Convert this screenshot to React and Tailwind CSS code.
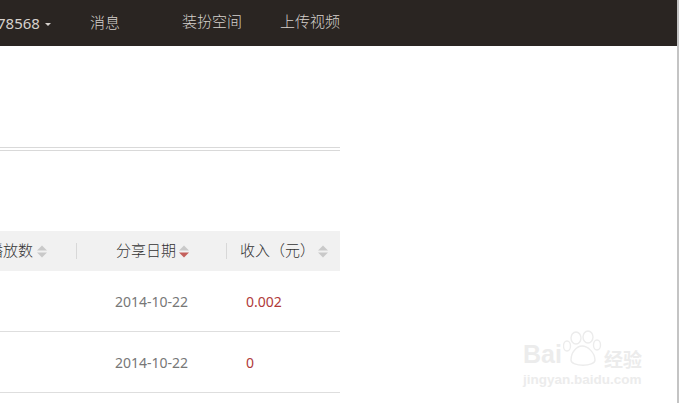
const cjk = { fontFamily: '"Noto Sans CJK SC", sans-serif' };
const latin = { fontFamily: '"Noto Sans", sans-serif' };

const SortArrows = ({ active }) => (
  <svg width="10" height="13" viewBox="0 0 10 13" className="shrink-0">
    <path d="M5 0.5 L10 5.5 H0 Z" fill="#c9c9c9" />
    <path d="M5 12.5 L10 7.5 H0 Z" fill={active ? "#c4605c" : "#c9c9c9"} />
  </svg>
);

const Row = ({ date, income }) => (
  <div className="h-[61px] border-b border-[#dedede] flex items-center text-[14px]" style={latin}>
    <span className="ml-[115px] w-[131px] text-[#777]">{date}</span>
    <span className="text-[#b03a3a]">{income}</span>
  </div>
);

export default function App() {
  return (
    <div className="w-[681px] h-[403px] bg-white overflow-hidden relative" style={cjk}>
      <div className="h-[46px] w-[677px] bg-[#2a2522] flex items-center text-[15px] font-light text-[#d6d1cd] whitespace-nowrap">
        <span className="ml-[-3px] text-[15px] font-normal" style={latin}>78568</span>
        <span className="ml-[5px] mt-[2px] border-x-[3.5px] border-x-transparent border-t-[3.5px] border-t-[#d6d1cd]" />
        <span className="ml-[39px] mt-[-2px]">消息</span>
        <span className="ml-[62px] mt-[-3px]">装扮空间</span>
        <span className="ml-[38px] mt-[-3px]">上传视频</span>
      </div>
      <div className="w-[340px]">
        <div className="h-[105px] border-b-[4px] border-double border-[#d9d9d9]" />
        <div className="mt-[80px] h-[40px] bg-[#f1f1f1] flex items-center text-[15px] font-light text-[#333] whitespace-nowrap overflow-hidden">
          <span className="ml-[-12px] w-[45px] text-right mt-[-2px]">播放数</span>
          <span className="ml-[4px]"><SortArrows /></span>
          <span className="ml-[29px] w-px h-[16px] bg-[#d8d8d8]" />
          <span className="ml-[39px] mt-[-2px]">分享日期</span>
          <span className="ml-[3px]"><SortArrows active /></span>
          <span className="ml-[37px] w-px h-[16px] bg-[#d8d8d8]" />
          <span className="ml-[13px] mt-[-2px]">收入（元）</span>
          <span className="ml-[3px]"><SortArrows /></span>
        </div>
        <Row date="2014-10-22" income="0.002" />
        <Row date="2014-10-22" income="0" />
      </div>
      <div className="absolute left-[677px] top-0 bottom-0 w-[2px] bg-[#c4c4c4]" />
      <div className="absolute left-[523px] top-[330px] text-[#ececec] select-none font-['Liberation_Sans',sans-serif]">
        <div className="flex items-end">
          <span className="text-[25px] leading-[28px] font-bold">Bai</span>
          <svg width="40" height="38" viewBox="0 0 40 38" className="mx-[1px]" fill="none" stroke="#ececec" strokeWidth="1.4">
            <ellipse cx="13" cy="8" rx="5" ry="6" />
            <ellipse cx="25" cy="7" rx="5" ry="6" />
            <ellipse cx="4" cy="16" rx="3.5" ry="5" />
            <ellipse cx="34" cy="15" rx="3.5" ry="5" />
            <path d="M8 30 C8 22 14 16 19 16 C25 16 32 23 32 30 C32 37 8 37 8 30 Z" />
          </svg>
          <span className="text-[19px] leading-[28px] font-bold mb-[-5px]" style={cjk}>经验</span>
        </div>
        <div className="text-[13.5px] leading-[14px] font-bold mt-[5px]">jingyan.baidu.com</div>
      </div>
    </div>
  );
}
